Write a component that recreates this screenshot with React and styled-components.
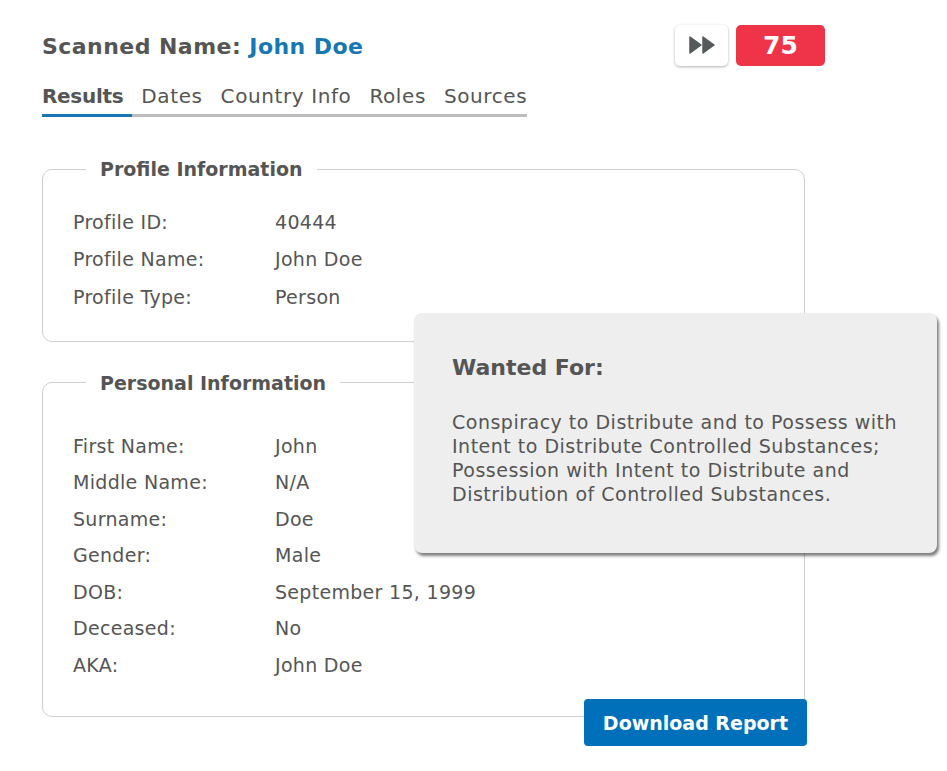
import React from "react";
import styled, { createGlobalStyle } from "styled-components";

const textGray = "#555555";
const brandBlue = "#1677b3";
const buttonBlue = "#0070ba";
const badgeRed = "#ef3348";
const lineGray = "#cfcfcf";

const GlobalStyle = createGlobalStyle`
  body {
    margin: 0;
    background: #ffffff;
    font-family: "DejaVu Sans", "Noto Sans", sans-serif;
    color: ${textGray};
  }
`;

const Page = styled.div`
  position: relative;
  width: 947px;
  height: 771px;
  padding: 26px 0 0 42px;
  box-sizing: border-box;
`;

const Header = styled.div`
  display: flex;
  align-items: center;
  justify-content: space-between;
  width: 783px;
  height: 42px;
  margin-top: -1px;
`;

const Title = styled.h1`
  margin: 0;
  font-size: 22px;
  font-weight: 700;
  letter-spacing: 0.45px;
  color: ${textGray};

  span {
    color: ${brandBlue};
  }
`;

const Actions = styled.div`
  display: flex;
  gap: 8px;
  margin-top: -2px;
`;

const SkipButton = styled.button`
  width: 53px;
  height: 41px;
  border: none;
  border-radius: 5px;
  background: #ffffff;
  box-shadow: 0 1px 3px rgba(0, 0, 0, 0.3);
  display: flex;
  align-items: center;
  justify-content: center;
  padding: 0;
`;

const ScoreBadge = styled.div`
  width: 89px;
  height: 41px;
  border-radius: 5px;
  background: ${badgeRed};
  color: #ffffff;
  font-size: 25px;
  font-weight: 700;
  display: flex;
  align-items: center;
  justify-content: center;
`;

const Tabs = styled.div`
  display: inline-flex;
  margin-top: 17px;
  border-bottom: 3px solid #bdbdbd;
`;

const Tab = styled.div`
  padding: 0 9px 6px;
  font-size: 20px;
  font-weight: ${(p) => (p.$active ? 700 : 400)};
  letter-spacing: ${(p) => (p.$active ? "-0.3px" : "0.6px")};
  color: ${textGray};
  margin-bottom: -3px;
  border-bottom: 3px solid ${(p) => (p.$active ? brandBlue : "transparent")};

  &:first-child {
    padding-left: 0;
  }
  &:last-child {
    padding-right: 0;
  }
`;

const Section = styled.fieldset`
  width: 763px;
  box-sizing: border-box;
  margin: ${(p) => p.$top}px 0 0;
  padding: ${(p) => p.$padTop}px 0 ${(p) => p.$padBottom}px 30px;
  border: 1px solid ${lineGray};
  border-radius: 10px;
`;

const Legend = styled.legend`
  margin-left: 13px;
  padding: 0 14px;
  font-size: 19px;
  font-weight: 700;
  color: ${textGray};
`;

const Rows = styled.div`
  display: grid;
  grid-template-columns: 202px 1fr;
  grid-auto-rows: ${(p) => p.$row}px;
  align-items: center;
  font-size: 19px;
  letter-spacing: 0.3px;
  color: ${textGray};
`;

const Footer = styled.div`
  display: flex;
  justify-content: flex-end;
  width: 765px;
  margin-top: -18px;
`;

const DownloadButton = styled.button`
  height: 47px;
  padding: 0 19px;
  border: none;
  border-radius: 4px;
  background: ${buttonBlue};
  color: #ffffff;
  font-family: inherit;
  font-size: 19px;
  font-weight: 700;
`;

const Tooltip = styled.div`
  position: absolute;
  left: 414px;
  top: 313px;
  width: 523px;
  height: 240px;
  box-sizing: border-box;
  padding: 42px 20px 0 38px;
  background: #eeeeee;
  border-radius: 8px;
  box-shadow: 2px 3px 3px rgba(0, 0, 0, 0.5);
`;

const TooltipTitle = styled.h2`
  margin: 0;
  font-size: 22px;
  font-weight: 700;
  color: ${textGray};
`;

const TooltipText = styled.p`
  margin: 30px 0 0;
  font-size: 19px;
  letter-spacing: 0.5px;
  line-height: 24px;
  color: ${textGray};
`;

const FastForward = () => (
  <svg width="28" height="20" viewBox="0 0 28 20">
    <path d="M2 2 L13 10 L2 18 Z" fill="#555a5a" stroke="#555a5a" strokeWidth="1.5" strokeLinejoin="round" />
    <path d="M15 2 L26 10 L15 18 Z" fill="#555a5a" stroke="#555a5a" strokeWidth="1.5" strokeLinejoin="round" />
  </svg>
);

const profile = [
  ["Profile ID:", "40444"],
  ["Profile Name:", "John Doe"],
  ["Profile Type:", "Person"],
];

const personal = [
  ["First Name:", "John"],
  ["Middle Name:", "N/A"],
  ["Surname:", "Doe"],
  ["Gender:", "Male"],
  ["DOB:", "September 15, 1999"],
  ["Deceased:", "No"],
  ["AKA:", "John Doe"],
];

const tabs = ["Results", "Dates", "Country Info", "Roles", "Sources"];

const App = () => (
  <>
    <GlobalStyle />
    <Page>
      <Header>
        <Title>
          Scanned Name: <span>John Doe</span>
        </Title>
        <Actions>
          <SkipButton>
            <FastForward />
          </SkipButton>
          <ScoreBadge>75</ScoreBadge>
        </Actions>
      </Header>

      <Tabs>
        {tabs.map((t, i) => (
          <Tab key={t} $active={i === 0}>
            {t}
          </Tab>
        ))}
      </Tabs>

      <Section $top={41} $padTop={23} $padBottom={25}>
        <Legend>Profile Information</Legend>
        <Rows $row={37.5}>
          {profile.map(([k, v]) => (
            <React.Fragment key={k}>
              <span>{k}</span>
              <span>{v}</span>
            </React.Fragment>
          ))}
        </Rows>
      </Section>

      <Section $top={30} $padTop={34} $padBottom={33}>
        <Legend>Personal Information</Legend>
        <Rows $row={36.5}>
          {personal.map(([k, v]) => (
            <React.Fragment key={k}>
              <span>{k}</span>
              <span>{v}</span>
            </React.Fragment>
          ))}
        </Rows>
      </Section>

      <Footer>
        <DownloadButton>Download Report</DownloadButton>
      </Footer>

      <Tooltip>
        <TooltipTitle>Wanted For:</TooltipTitle>
        <TooltipText>
          Conspiracy to Distribute and to Possess with Intent to Distribute
          Controlled Substances; Possession with Intent to Distribute and
          Distribution of Controlled Substances.
        </TooltipText>
      </Tooltip>
    </Page>
  </>
);

export default App;
